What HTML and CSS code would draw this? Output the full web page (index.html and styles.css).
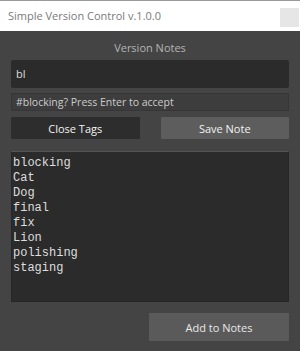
FILE: index.html
```html
<!DOCTYPE html>
<html lang="en">
<head>
    <meta charset="UTF-8">
    <title>Simple Version Control v.1.0.0</title>
    <link rel="stylesheet" href="styles.css">
</head>
<body>

    <!-- Barra de titulo -->
    <div class="titlebar">
        <span class="title">Simple Version Control v.1.0.0</span>
        <span class="close-box"></span>
    </div>

    <div class="panel">
        <div class="heading">Version Notes</div>

        <div class="field">bl</div>
        <div class="hint">#blocking? Press Enter to accept</div>

        <div class="btn-row">
            <button class="btn btn-dark">Close Tags</button>
            <button class="btn">Save Note</button>
        </div>

        <ul class="tags">
            <li>blocking</li>
            <li>Cat</li>
            <li>Dog</li>
            <li>final</li>
            <li>fix</li>
            <li>Lion</li>
            <li>polishing</li>
            <li>staging</li>
        </ul>

        <div class="footer">
            <button class="btn btn-add">Add to Notes</button>
        </div>
    </div>

</body>
</html>
```

FILE: styles.css
```css
* {
    margin: 0;
    padding: 0;
    box-sizing: border-box;
    font-family: 'Open Sans', 'Noto Sans', sans-serif;
}

body {
    width: 300px;
    height: 351px;
    background-color: #444444;
    overflow: hidden;
}

.titlebar {
    height: 31px;
    background-color: #ffffff;
    border-top: 1px solid #9a9a9a;
    display: flex;
    justify-content: space-between;
    align-items: flex-start;
}

.title {
    font-size: 11px;
    line-height: 30px;
    color: #7a7a7a;
    padding-left: 8px;
}

.close-box {
    width: 19px;
    height: 19px;
    margin-top: 7px;
    margin-right: 1px;
    background-color: #e6e6e6;
}

.panel {
    background-color: #444444;
    height: 320px;
    padding: 0 11px;
}

.heading {
    text-align: center;
    color: #b4b4b4;
    font-size: 11px;
    line-height: 16px;
    padding-top: 9px;
    margin-bottom: 4px;
}

.field {
    height: 28px;
    background-color: #2b2b2b;
    border-radius: 2px;
    color: #dcdcdc;
    font-size: 11px;
    line-height: 28px;
    padding-left: 5px;
}

.hint {
    height: 18px;
    margin-top: 5px;
    background-color: #3d3d3d;
    border: 1px solid #363636;
    color: #cccccc;
    font-size: 10.5px;
    line-height: 16px;
    padding-left: 4px;
}

.btn-row {
    display: grid;
    grid-template-columns: 1fr 1fr;
    gap: 21px;
    margin-top: 6px;
}

.btn {
    height: 22px;
    border: none;
    border-radius: 1px;
    background-color: #5d5d5d;
    color: #f2f2f2;
    font-size: 11px;
    font-weight: 400;
}

.btn-dark {
    background-color: #2d2d2d;
}

.tags {
    list-style: none;
    height: 151px;
    margin-top: 12px;
    background-color: #2b2b2b;
    border: 1px solid #262626;
    border-top-color: #555555;
    padding: 4px 1px;
}

.tags li {
    font-family: 'Liberation Mono', monospace;
    font-size: 12px;
    line-height: 15px;
    color: #dedede;
}

.footer {
    display: flex;
    justify-content: flex-end;
    margin-top: 11px;
}

.btn-add {
    width: 140px;
    height: 28px;
    background-color: #5a5a5a;
    color: #e8e8e8;
}
```
